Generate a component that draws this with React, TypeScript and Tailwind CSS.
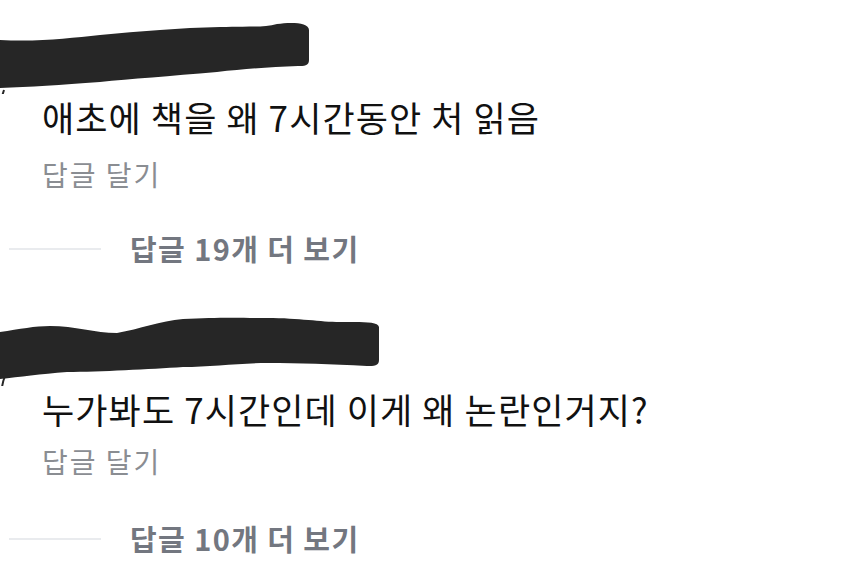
import React from "react";

const FONT = { fontFamily: '"Noto Sans CJK KR", "Noto Sans", sans-serif' };

interface CommentProps {
  svgHeight: number;
  scribble: string;
  arc: string;
  text: string;
  replies: number;
  replyGap: string;
  moreGap: string;
}

const Comment: React.FC<CommentProps> = ({ svgHeight, scribble, arc, text, replies, replyGap, moreGap }) => {
  return (
    <div className="flex flex-col">
      {/* redacted username */}
      <svg width="848" height={svgHeight} className="block">
        <path d={scribble} fill="#262626" />
        <path d={arc} fill="none" stroke="#262626" strokeWidth="2" />
      </svg>
      <p className="pl-[42px] text-[35px] leading-[46px] text-[#111111] tracking-[1.1px] whitespace-nowrap">{text}</p>
      <p className={`pl-[42px] text-[28px] leading-[40px] text-[#8a8d92] tracking-[2px] ${replyGap}`}>답글 달기</p>
      <div className={`flex items-center h-[40px] ${moreGap}`}>
        <div className="ml-[9px] w-[92px] h-[2px] bg-[#e9ebee]" />
        <span className="ml-[29px] text-[29px] font-bold text-[#737780] tracking-[1.4px] whitespace-nowrap">
          답글 {replies}개 더 보기
        </span>
      </div>
    </div>
  );
};

export default function App() {
  return (
    <div className="w-[848px] h-[561px] bg-white overflow-hidden" style={FONT}>
      <Comment
        svgHeight={94}
        scribble="M0,40 C40,42 70,38 100,35 C140,31 180,28 220,27 C245,26 262,28 277,24 C290,22 309,22 309,30 L309,60 C309,66 304,66 298,66 C270,67 245,69 217,72 C170,76 130,79 100,82 C60,85 30,87 0,88 Z"
        arc="M4,90 C2,96 1,100 1,104"
        text="애초에 책을 왜 7시간동안 처 읽음"
        replies={19}
        replyGap="mt-[14px]"
        moreGap="mt-[35px]"
      />
      <Comment
        svgHeight={117}
        scribble="M0,63 C20,60 35,57 50,57 C75,57 95,64 117,64 C140,60 160,52 183,50 C220,48 245,49 267,49 C300,49 320,53 340,53 C360,53 378,52 379,58 L379,91 C379,97 374,97 367,97 C330,95 300,94 267,94 C240,94 210,98 183,98 C150,100 100,103 67,103 C40,105 20,108 0,110 Z"
        arc="M5,107 C3,112 2,116 2,120"
        text="누가봐도 7시간인데 이게 왜 논란인거지?"
        replies={10}
        replyGap="mt-[9px]"
        moreGap="mt-[38px]"
      />
    </div>
  );
}
